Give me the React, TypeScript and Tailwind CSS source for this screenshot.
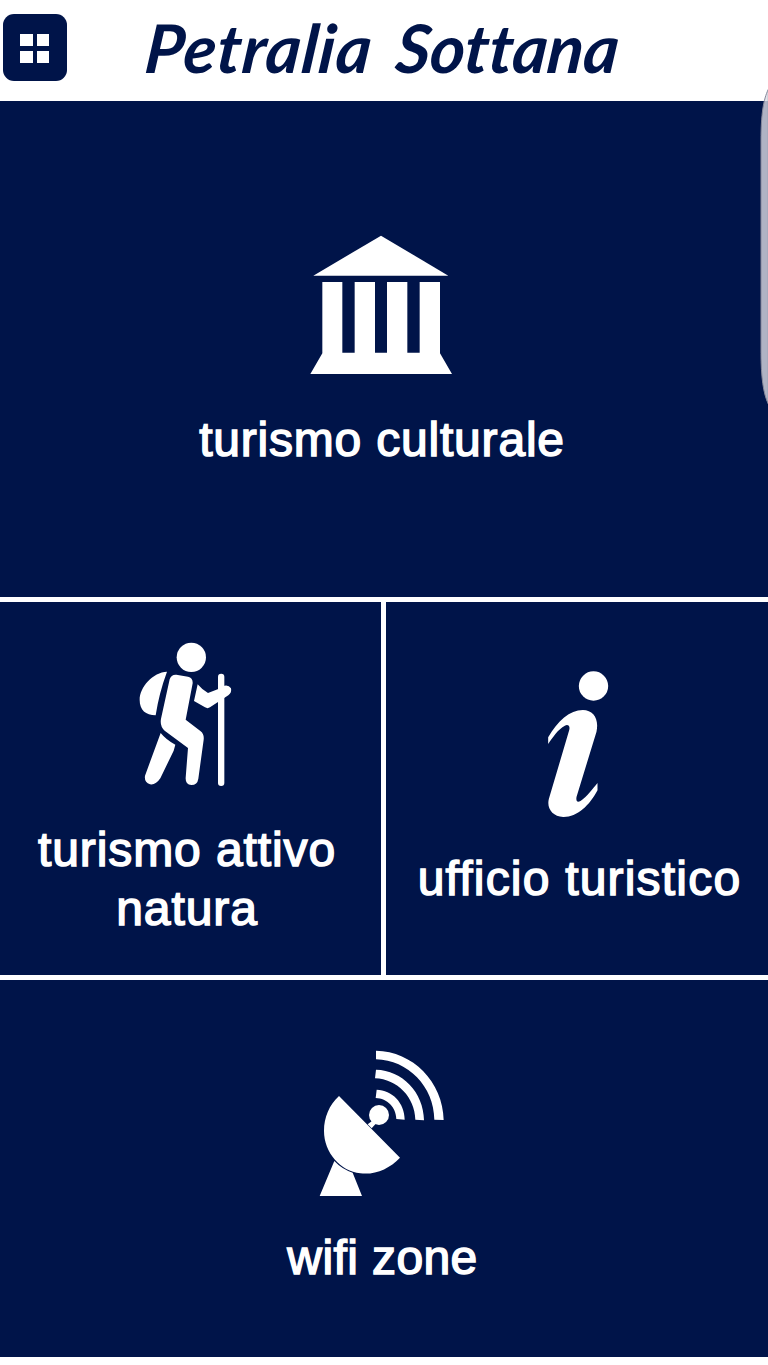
import { ReactNode } from "react";

const TempleIcon = () => (
    <svg
        className="w-[165px] h-[160px] fill-white"
        viewBox="-3 0 495 480"
        aria-hidden="true"
    >
        <path d="M243 32 L445 152 H40 Z" />
        <path d="M67 171 H127 V383 H164 V171 H225 V383 H261 V171 H322 V383 H359 V171 H420 V385 L456 447 H31 L67 385 Z" />
    </svg>
);

const HikerIcon = () => (
    <svg
        className="w-[120px] h-[170px] fill-white"
        viewBox="3 0 360 510"
        aria-hidden="true"
    >
        <circle cx="199" cy="82" r="44" />
        {/* backpack */}
        <path d="M126 125 C84 127 44 170 44 210 C44 240 62 256 92 256 Q102 190 126 125 Z" />
        {/* torso and front leg */}
        <path d="M134 148 Q138 133 154 134 L189 140 Q204 143 203 160 L182 269 L227 304 Q238 313 236 329 L220 446 Q217 465 199 465 Q181 464 182 443 L189 354 L119 302 Q104 289 108 266 Z" />
        {/* back leg */}
        <path d="M107 309 Q124 330 151 344 L146 362 L106 445 Q92 466 75 463 Q57 458 60 437 Z" />
        {/* arm */}
        <path d="M218 163 Q230 178 249 189 L278 178 L298 167 Q311 164 318 175 Q321 188 310 196 L255 232 Q248 237 240 232 L207 213 Z" />
        <rect x="279" y="131" width="19" height="337" rx="9.5" />
    </svg>
);

const InfoIcon = () => (
    <svg
        className="w-[100px] h-[170px] fill-white"
        viewBox="-3.5 0 300 510"
        aria-hidden="true"
    >
        <circle cx="190" cy="78" r="44" />
        <path d="M54 252 V232 C82 183 119 150 158 150 C190 151 207 176 199 215 L139 411 C137 425 142 428 151 423 C170 410 188 386 202 369 V391 C178 437 140 472 99 471 C67 469 49 445 56 417 L117 211 C121 197 113 192 104 197 C84 207 67 233 54 252 Z" />
    </svg>
);

const DishIcon = () => (
    <svg
        className="w-[150px] h-[175px] fill-white"
        viewBox="6 0 450 525"
        aria-hidden="true"
    >
        <path d="M213 47 C323 49 414 140 416 255 L388 254 C387 155 309 75 213 73 Z" />
        <path d="M213 104 C291 106 356 171 357 256 L331 254 C330 188 277 132 210 130 Z" />
        <path d="M215 164 C261 165 299 203 299 254 L274 252 C273 217 247 190 212 189 Z" />
        <circle cx="222" cy="240" r="30" />
        <path d="M206 254 L215 263 L200 280 L188 268 Z" />
        <path d="M102 183 L285 368 C253 401 212 420 166 415 C107 409 57 353 57 288 C57 246 73 210 102 183 Z" />
        <path d="M88 378 Q110 402 143 413 L171 483 H44 Z" />
    </svg>
);

type TileProps = {
    icon: ReactNode;
    label: string;
    className: string;
    labelClassName: string;
};

const Tile = ({ icon, label, className, labelClassName }: TileProps) => (
    <button
        className={`flex flex-col items-center justify-start bg-[#001449] text-white ${className}`}
    >
        {icon}
        <span
            className={`pl-[2px] text-center text-[48px] [-webkit-text-stroke:1.5px_white] ${labelClassName}`}
        >
            {label}
        </span>
    </button>
);

// Translucent grip of the edge panel, it hangs over the right side of the page
const EdgeHandle = () => (
    <svg
        className="absolute right-0 top-[70px] w-[40px] h-[350px]"
        viewBox="0 0 120 1050"
        aria-hidden="true"
    >
        <path
            d="M121 58 C106 88 99 135 99 210 V850 C99 920 106 972 121 1002 Z"
            fill="#dcdbe4"
            fillOpacity="0.8"
            stroke="#85889b"
            strokeWidth="3"
        />
    </svg>
);

export default function App() {
    return (
        <div className="relative flex flex-col w-[768px] h-[1365px] overflow-hidden bg-white font-['Liberation_Sans',Arial,sans-serif]">
            <header className="flex items-start h-[101px] shrink-0">
                <button
                    className="mt-[14px] ml-[3px] pr-px pt-px w-16 h-[67px] shrink-0 rounded-[11px] bg-[#001449] flex items-center justify-center"
                    aria-label="Menu"
                >
                    <span className="grid grid-cols-2 gap-x-[4px] gap-y-[5px]">
                        <span className="w-[12.5px] h-3 bg-white" />
                        <span className="w-[12.5px] h-3 bg-white" />
                        <span className="w-[12.5px] h-3 bg-white" />
                        <span className="w-[12.5px] h-3 bg-white" />
                    </span>
                </button>
                <h1 className="ml-[79px] mt-[7px] whitespace-nowrap font-['Lato',sans-serif] italic font-bold text-[67px] leading-[80px] tracking-[1px] [word-spacing:8px] text-[#001449] -skew-x-6">
                    Petralia <span className="tracking-[-0.1px]">Sottana</span>
                </h1>
            </header>

            <main className="flex flex-col gap-[5px]">
                <Tile
                    icon={<TempleIcon />}
                    label="turismo culturale"
                    className="h-[496px] pt-[124px] pr-[6px]"
                    labelClassName="mt-[25px] leading-[60px] tracking-[0.8px]"
                />
                <div className="flex gap-[5px] h-[373px]">
                    <Tile
                        icon={<HikerIcon />}
                        label="turismo attivo natura"
                        className="w-[381px] pt-[28px] pr-[9px]"
                        labelClassName="mt-[20px] w-[340px] leading-[59px] tracking-[0.9px]"
                    />
                    <Tile
                        icon={<InfoIcon />}
                        label="ufficio turistico"
                        className="w-[382px] pt-[58px] pl-[3px]"
                        labelClassName="mt-[19px] leading-[60px] tracking-[1.2px]"
                    />
                </div>
                <Tile
                    icon={<DishIcon />}
                    label="wifi zone"
                    className="h-[377px] pt-[55px] pr-[5px]"
                    labelClassName="mt-[18px] leading-[60px] tracking-[0.4px]"
                />
            </main>

            <EdgeHandle />
        </div>
    );
}
